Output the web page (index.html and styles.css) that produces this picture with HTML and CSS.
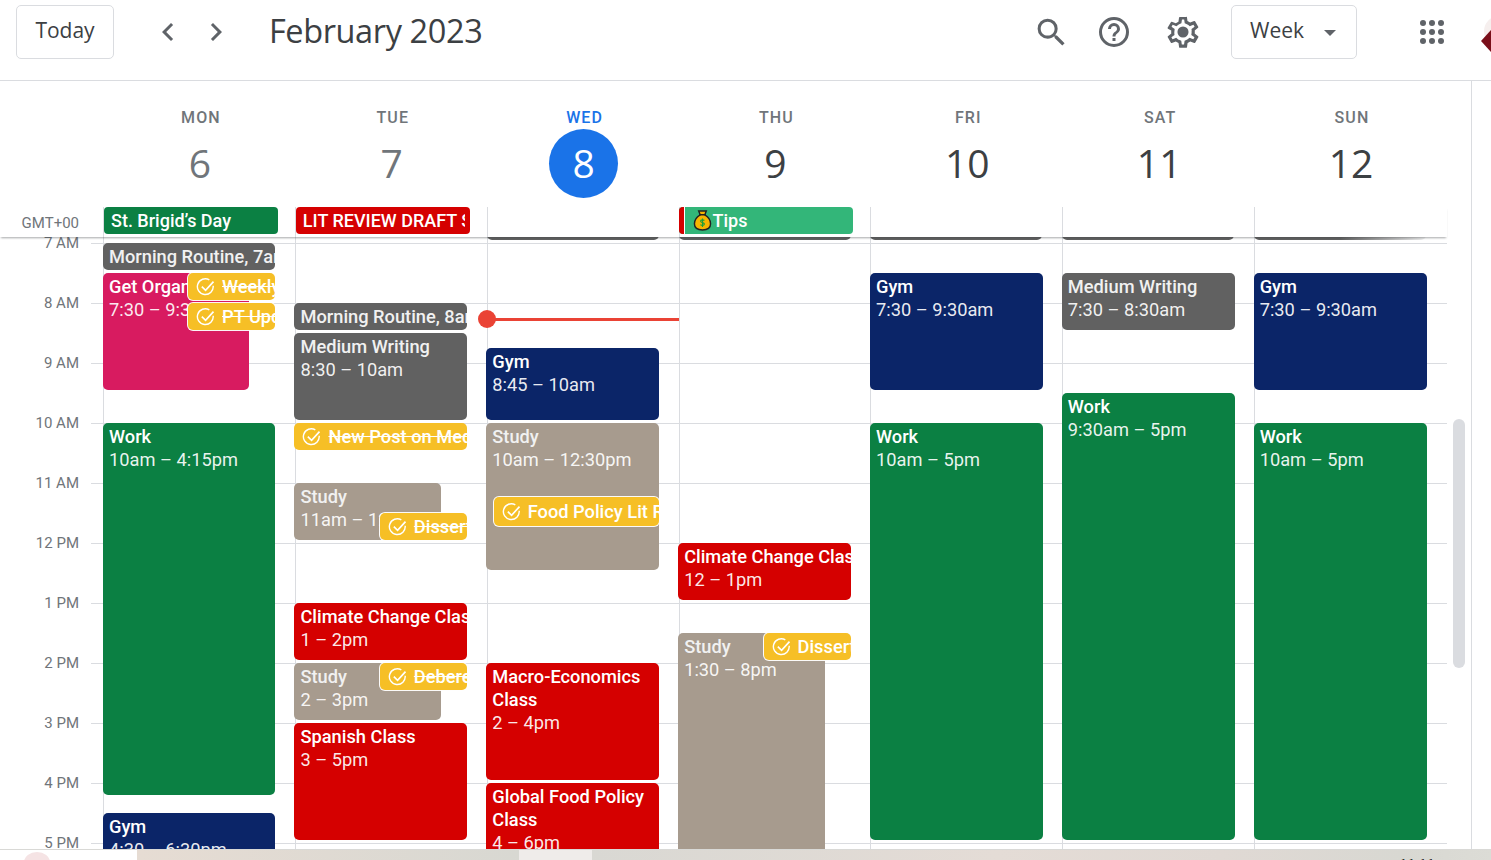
FILE: index.html
```html
<!DOCTYPE html>
<html lang="en">
<head>
<meta charset="utf-8">
<title>Google Calendar - Week of February 6, 2023</title>
<link rel="stylesheet" href="styles.css">
</head>
<body>
<div class="app">
  <header class="toolbar">
    <button class="btn btn-today"><span class="btn-label">Today</span></button>
    <div class="nav">
      <svg class="chev" viewBox="0 0 24 24"><path d="M15.4 7.4 14 6l-6 6 6 6 1.4-1.4L10.8 12z"/></svg>
      <svg class="chev" viewBox="0 0 24 24"><path d="M8.6 16.6 10 18l6-6-6-6-1.4 1.4L13.2 12z"/></svg>
    </div>
    <h1 class="title">February 2023</h1>
    <div class="tools">
      <svg class="icon icon-search" viewBox="0 0 24 24"><path d="M15.5 14h-.79l-.28-.27A6.47 6.47 0 0 0 16 9.5 6.5 6.5 0 1 0 9.5 16c1.61 0 3.09-.59 4.23-1.57l.27.28v.79l5 4.99L20.49 19l-4.99-5zm-6 0C7.01 14 5 11.99 5 9.5S7.01 5 9.5 5 14 7.01 14 9.5 11.99 14 9.500 14z"/></svg>
      <svg class="icon icon-help" viewBox="0 0 24 24"><path d="M11 18h2v-2h-2v2zm1-16a10 10 0 1 0 0 20 10 10 0 0 0 0-20zm0 18a8 8 0 1 1 0-16 8 8 0 0 1 0 16zm0-14a4 4 0 0 0-4 4h2a2 2 0 1 1 4 0c0 2-3 1.750-3 5h2c0-2.250 3-2.500 3-5a4 4 0 0 0-4-4z"/></svg>
      <svg class="icon icon-gear" viewBox="0 0 24 24"><path d="M19.4 13a7.500 7.500 0 0 0 0-2l2.100-1.650a.5.500 0 0 0 .12-.64l-2-3.460a.5.500 0 0 0-.61-.22l-2.490 1a7.300 7.300 0 0 0-1.690-.98l-.38-2.650A.5.500 0 0 0 14 2.500h-4a.5.500 0 0 0-.49.42l-.38 2.650c-.61.250-1.170.590-1.690.98l-2.490-1a.5.500 0 0 0-.61.220l-2 3.460a.5.500 0 0 0 .12.640L4.600 11a7.900 7.900 0 0 0 0 2l-2.110 1.650a.5.500 0 0 0-.12.640l2 3.460c.12.220.39.300.61.220l2.490-1c.52.400 1.080.730 1.690.98l.38 2.650c.03.240.24.420.49.420h4c.25 0 .46-.18.490-.42l.38-2.650c.61-.250 1.170-.590 1.690-.98l2.490 1c.23.080.490 0 .61-.22l2-3.460a.5.500 0 0 0-.12-.64L19.400 13zM17.400 11.300c.04.310.05.520.05.700s-.02.400-.05.700l-.14 1.130.89.700 1.080.84-.7 1.210-1.270-.51-1.040-.42-.9.680c-.43.320-.84.560-1.250.73l-1.060.43-.16 1.130-.2 1.350h-1.400l-.19-1.350-.16-1.130-1.060-.43c-.43-.18-.83-.41-1.230-.71l-.91-.7-1.060.43-1.270.51-.7-1.210 1.080-.84.89-.7-.14-1.130A8 8 0 0 1 6.550 12c0-.2.020-.43.05-.7l.14-1.130-.89-.7-1.080-.84.7-1.210 1.270.51 1.040.42.900-.68c.43-.32.840-.56 1.250-.73l1.060-.43.160-1.130.2-1.350h1.390l.19 1.350.16 1.130 1.060.43c.43.180.83.410 1.230.71l.91.700 1.060-.43 1.270-.51.700 1.210-1.070.85-.89.700.14 1.130zM12 8.500a3.500 3.500 0 1 0 0 7 3.500 3.500 0 0 0 0-7z"/></svg>
    </div>
    <button class="btn btn-week"><span class="btn-label">Week</span><span class="caret"></span></button>
    <div class="apps">
      <i></i><i></i><i></i><i></i><i></i><i></i><i></i><i></i><i></i>
    </div>
    <div class="avatar"><span class="avatar-mark"></span></div>
  </header>

  <main class="body">
    <section class="calendar">
      <div class="day-heads">
        <div class="day-head"><span class="dow">MON</span><span class="num past">6</span></div>
        <div class="day-head"><span class="dow">TUE</span><span class="num past">7</span></div>
        <div class="day-head today"><span class="dow">WED</span><span class="num">8</span></div>
        <div class="day-head"><span class="dow">THU</span><span class="num">9</span></div>
        <div class="day-head"><span class="dow">FRI</span><span class="num">10</span></div>
        <div class="day-head"><span class="dow">SAT</span><span class="num">11</span></div>
        <div class="day-head"><span class="dow">SUN</span><span class="num">12</span></div>
      </div>

      <div class="allday">
        <div class="tz">GMT+00</div>
        <div class="allday-cols">
          <div class="allday-col"><div class="chip green"><span class="chip-text">St. Brigid’s Day</span></div></div>
          <div class="allday-col"><div class="chip red"><span class="chip-text">LIT REVIEW DRAFT SUBMISSION</span></div></div>
          <div class="allday-col"></div>
          <div class="allday-col">
            <div class="chip tips">
              <span class="tips-flag"></span>
              <span class="tips-body">
                <svg class="bag" viewBox="0 0 20 22"><path d="M6 1h8l-1.500 4c3.500 2 6 5.500 6 9.500 0 4.500-3.500 6.500-8.500 6.500s-8.500-2-8.500-6.500c0-4 2.500-7.500 6-9.500z" fill="#f7b500" stroke="#222" stroke-width="1.500"/><path d="M6.500 5h7" stroke="#222" stroke-width="1.500"/><path d="M12 11c-1-1-4-1-4 .800s4 1 4 3c0 1.800-3 1.800-4.200.600M10 8.800v9" fill="none" stroke="#1e9e3a" stroke-width="1.200"/></svg>Tips
              </span>
            </div>
          </div>
          <div class="allday-col"></div>
          <div class="allday-col"></div>
          <div class="allday-col"></div>
        </div>
      </div>

      <div class="timegrid">
        <div class="hours">
          <div class="hour"><span class="hour-label">7 AM</span></div>
          <div class="hour"><span class="hour-label">8 AM</span></div>
          <div class="hour"><span class="hour-label">9 AM</span></div>
          <div class="hour"><span class="hour-label">10 AM</span></div>
          <div class="hour"><span class="hour-label">11 AM</span></div>
          <div class="hour"><span class="hour-label">12 PM</span></div>
          <div class="hour"><span class="hour-label">1 PM</span></div>
          <div class="hour"><span class="hour-label">2 PM</span></div>
          <div class="hour"><span class="hour-label">3 PM</span></div>
          <div class="hour"><span class="hour-label">4 PM</span></div>
          <div class="hour"><span class="hour-label">5 PM</span></div>
        </div>

        <div class="columns">
          <div class="col">
            <div class="ev grey full short" style="top:6px;height:27px"><b>Morning Routine, 7am</b></div>
            <div class="ev pink narrow short" style="top:36px;height:117px"><b>Get Organised</b><span>7:30 – 9:30am</span></div>
            <div class="ev green full" style="top:186px;height:372px"><b>Work</b><span>10am – 4:15pm</span></div>
            <div class="ev navy full" style="top:576px;height:60px"><b>Gym</b><span>4:30 – 6:30pm</span></div>
            <div class="task done side" style="top:36px;height:27px"><svg class="tick" viewBox="0 0 24 24"><use href="#tick"/></svg><s>Weekly Review</s></div>
            <div class="task done side" style="top:66px;height:27px"><svg class="tick" viewBox="0 0 24 24"><use href="#tick"/></svg><s>PT Update</s></div>
          </div>
          <div class="col">
            <div class="ev grey full shift short" style="top:66px;height:27px"><b>Morning Routine, 8am</b></div>
            <div class="ev grey full shift" style="top:96px;height:87px"><b>Medium Writing</b><span>8:30 – 10am</span></div>
            <div class="task done full shift plain" style="top:186px;height:27px"><svg class="tick" viewBox="0 0 24 24"><use href="#tick"/></svg><s>New Post on Medium</s></div>
            <div class="ev taupe narrow shift" style="top:246px;height:57px"><b>Study</b><span>11am – 12pm</span></div>
            <div class="task done side" style="top:276px;height:27px"><svg class="tick" viewBox="0 0 24 24"><use href="#tick"/></svg><s>Dissertation</s></div>
            <div class="ev red full shift short" style="top:366px;height:57px"><b>Climate Change Class</b><span>1 – 2pm</span></div>
            <div class="ev taupe narrow shift" style="top:426px;height:57px"><b>Study</b><span>2 – 3pm</span></div>
            <div class="task done side" style="top:426px;height:27px"><svg class="tick" viewBox="0 0 24 24"><use href="#tick"/></svg><s>Debere</s></div>
            <div class="ev red full shift" style="top:486px;height:117px"><b>Spanish Class</b><span>3 – 5pm</span></div>
          </div>
          <div class="col">
            <div class="ev grey tail" style="top:-27px;height:30px"></div>
            <div class="ev navy full shift" style="top:111px;height:72px"><b>Gym</b><span>8:45 – 10am</span></div>
            <div class="ev taupe full shift" style="top:186px;height:147px"><b>Study</b><span>10am – 12:30pm</span></div>
            <div class="task wide" style="top:260px;height:29px"><svg class="tick" viewBox="0 0 24 24"><use href="#tick"/></svg>Food Policy Lit Review</div>
            <div class="ev red full shift" style="top:426px;height:117px"><b>Macro-Economics Class</b><span>2 – 4pm</span></div>
            <div class="ev red full shift" style="top:546px;height:90px"><b>Global Food Policy Class</b><span>4 – 6pm</span></div>
            <div class="now"><span class="now-dot"></span></div>
          </div>
          <div class="col">
            <div class="ev grey tail" style="top:-27px;height:30px"></div>
            <div class="ev red full shift short" style="top:306px;height:57px"><b>Climate Change Class</b><span>12 – 1pm</span></div>
            <div class="ev taupe narrow shift" style="top:396px;height:240px"><b>Study</b><span>1:30 – 8pm</span></div>
            <div class="task side" style="top:396px;height:27px"><svg class="tick" viewBox="0 0 24 24"><use href="#tick"/></svg>Dissertation</div>
          </div>
          <div class="col">
            <div class="ev grey tail" style="top:-27px;height:30px"></div>
            <div class="ev navy full shift" style="top:36px;height:117px"><b>Gym</b><span>7:30 – 9:30am</span></div>
            <div class="ev green full shift" style="top:186px;height:417px"><b>Work</b><span>10am – 5pm</span></div>
          </div>
          <div class="col">
            <div class="ev grey tail" style="top:-27px;height:30px"></div>
            <div class="ev grey full shift" style="top:36px;height:57px"><b>Medium Writing</b><span>7:30 – 8:30am</span></div>
            <div class="ev green full shift" style="top:156px;height:447px"><b>Work</b><span>9:30am – 5pm</span></div>
          </div>
          <div class="col">
            <div class="ev grey tail fade" style="top:-27px;height:30px"></div>
            <div class="ev navy full shift" style="top:36px;height:117px"><b>Gym</b><span>7:30 – 9:30am</span></div>
            <div class="ev green full shift" style="top:186px;height:417px"><b>Work</b><span>10am – 5pm</span></div>
          </div>
        </div>
        <div class="scrollbar"></div>
      </div>
    </section>
    <aside class="side-rail"></aside>
  </main>

  <footer class="desktop">
    <div class="desk-a"><span class="blob"></span></div>
    <div class="desk-b"></div>
    <div class="desk-c"></div>
    <div class="desk-d"><span class="clock">11:11</span></div>
  </footer>
</div>
<svg class="defs" width="0" height="0">
  <symbol id="tick" viewBox="0 0 24 24">
    <path d="M21 5.500 11.500 16l-4.500-4.500" fill="none" stroke="currentColor" stroke-width="2"/>
    <path d="M20.600 10.500A9.500 9.500 0 1 1 16 3.400" fill="none" stroke="currentColor" stroke-width="1.700"/>
  </symbol>
</svg>
</body>
</html>
```
FILE: styles.css
```css
* { box-sizing: border-box; }
html, body { margin: 0; height: 100%; overflow: hidden; background: #fff; }
body { font-family: Roboto, "Liberation Sans", sans-serif; color: #3c4043; }
.defs { position: absolute; }

.app { height: 860px; display: flex; flex-direction: column; overflow: hidden; }

/* toolbar */
.toolbar { height: 81px; flex: none; display: flex; align-items: flex-start; border-bottom: 1px solid #dadce0; padding: 5px 47px 0 16px; position: relative; }
.btn { height: 54px; background: #fff; border: 1px solid #dadce0; border-radius: 5px; font: 400 21px "Open Sans", Roboto, sans-serif; color: #3c4043; padding: 0; }
.btn-label { position: relative; top: -2px; }
.btn-today { width: 98px; }
.nav { display: flex; gap: 12px; margin: 9px 0 0 36px; }
.chev { width: 36px; height: 36px; fill: #5f6368; }
.title { margin: -1px 0 0 35px; font: 400 32.5px/54px "Open Sans", Roboto, sans-serif; color: #3c4043; letter-spacing: -.4px; white-space: nowrap; }
.tools { display: flex; align-items: center; margin-left: auto; margin-top: 8px; }
.icon { fill: #5f6368; flex: none; }
.icon-search { width: 37px; height: 37px; margin-right: 26px; }
.icon-help { width: 36px; height: 36px; margin-right: 32px; }
.icon-gear { width: 38px; height: 38px; }
.btn-week { width: 126px; margin-left: 29px; display: flex; align-items: center; padding-left: 18px; }
.caret { width: 0; height: 0; border: 6px solid transparent; border-top-color: #5f6368; border-bottom: 0; margin: 2px 0 0 20px; }
.apps { width: 24px; flex: none; display: grid; grid-template-columns: repeat(3, 6px); gap: 3px; margin: 15px 0 0 63px; }
.apps i { width: 6px; height: 6px; border-radius: 50%; background: #5f6368; }
.avatar { position: absolute; left: 1481px; top: 16px; width: 34px; height: 38px; overflow: hidden; }
.avatar::before { content: ""; position: absolute; left: 3px; top: 0; width: 30px; height: 30px; border-radius: 50%; background: #f6efee; }
.avatar-mark { position: absolute; left: 0; top: 14px; width: 10px; height: 22px; background: #7a0f1a; clip-path: polygon(0 50%, 100% 0, 100% 100%); }

/* body */
.body { flex: 1; min-height: 0; display: flex; }
.calendar { width: 1472px; flex: none; border-right: 1px solid #dadce0; display: flex; flex-direction: column; }
.side-rail { flex: 1; }

.day-heads { height: 126px; flex: none; display: grid; grid-template-columns: repeat(7, 191.857px); margin-left: 105px; }
.day-head { display: flex; flex-direction: column; align-items: center; padding-top: 27px; }
.dow { font-size: 16px; line-height: 20px; font-weight: 500; letter-spacing: 1.1px; color: #70757a; }
.num { width: 69px; height: 69px; margin: 1px 2px 0 0; padding-bottom: 3px; border-radius: 50%; display: flex; align-items: center; justify-content: center; font: 400 39px "Open Sans", Roboto, sans-serif; color: #3c4043; }
.num.past { color: #70757a; }
.today .dow { color: #1a73e8; }
.today .num { background: #1a73e8; color: #fff; }

.allday { height: 30px; flex: none; display: flex; position: relative; z-index: 3; box-shadow: 0 2px 2px -1px rgba(60,64,67,.45); background: #fff; margin-right: 24px; }
.tz { width: 103px; padding: 7px 24px 0 0; text-align: right; font-size: 15px; line-height: 18px; color: #70757a; white-space: nowrap; }
.allday-cols { flex: none; display: grid; grid-template-columns: repeat(7, 191.857px); }
.allday-col { border-left: 1px solid #dadce0; min-width: 0; }
.chip { width: 174px; height: 27px; border-radius: 4px; font-size: 18px; font-weight: 500; line-height: 27px; color: #fff; padding: 0 5px 0 7px; white-space: nowrap; overflow: hidden; }
.chip-text { display: block; overflow: hidden; }
.chip.green { background: #0b8043; }
.chip.red { background: #d50000; }
.chip.tips { background: #33b679; padding: 0; display: flex; margin-left: -1px; }
.tips-flag { width: 5px; background: #d50000; }
.tips-body { flex: 1; border-left: 1px solid #fff; display: flex; align-items: center; padding-left: 8px; }
.bag { width: 19px; height: 21px; margin-right: 1px; }

/* time grid */
.timegrid { flex: 1; min-height: 0; position: relative; overflow: hidden; }
.hours { padding-top: 6px; }
.hour { height: 60px; margin: 0 24px 0 91px; border-top: 1px solid #dadce0; position: relative; }
.hour-label { position: absolute; right: 100%; margin-right: 12px; top: -10px; font-size: 15px; line-height: 18px; color: #70757a; white-space: nowrap; }
.columns { position: absolute; top: 0; bottom: 0; left: 103px; display: grid; grid-template-columns: repeat(7, 191.857px); }
.col { position: relative; border-left: 1px solid #dadce0; }

.ev, .task { position: absolute; border-radius: 5px; color: #fff; font-size: 18.25px; overflow: hidden; white-space: nowrap; }
.ev { padding: 2px 0 0 6px; line-height: 23px; left: -1px; }
.ev b { display: block; font-weight: 500; white-space: normal; }
.ev.short b { white-space: nowrap; }
.ev span { display: block; color: rgba(255,255,255,.92); }
.ev.grey b, .ev.taupe b { color: #f1f1f1; }
.full { width: 172px; }
.narrow { width: 146px; }
.ev.shift { left: -1.4px; }
.full.shift { width: 173px; }
.narrow.shift { width: 147px; }
.grey { background: #616161; }
.pink { background: #d81b60; }
.green { background: #0b8043; }
.navy { background: #0b2568; }
.red { background: #d50000; }
.taupe { background: #a79b8e; }
.tail { width: 172px; z-index: 0; }
.fade { background: linear-gradient(90deg, #616161 0, #616161 50%, #fff 105%); }

.task { background: #f6bf26; line-height: 27px; display: flex; align-items: center; padding-left: 8px; font-weight: 500; z-index: 2; box-shadow: 0 0 0 1px rgba(255,255,255,.95); }
.task.plain { box-shadow: none; }
.task s { text-decoration: line-through; white-space: nowrap; }
.task.side { left: 84px; width: 87px; }
.task.wide { left: 6px; width: 165px; }
.tick { width: 20px; height: 20px; flex: none; margin-right: 6px; color: #fff; }
.task.plain.full { left: -1.4px; width: 173px; }

.now { position: absolute; left: 0; right: 0; top: 81px; height: 3px; background: #ea4335; z-index: 4; }
.now-dot { position: absolute; left: -10px; top: -8px; width: 18px; height: 18px; border-radius: 50%; background: #ea4335; }

.scrollbar { position: absolute; left: 1453px; top: 182px; width: 12px; height: 249px; border-radius: 6px; background: #dadce0; }

/* desktop strip */
.desktop { height: 11px; flex: none; display: flex; overflow: hidden; position: relative; z-index: 5; border-top: 1px solid #d9d9d6; }
.desk-a { width: 137px; background: #fff; position: relative; }
.blob { position: absolute; left: 24px; top: 2px; width: 26px; height: 20px; border-radius: 50%; background: #f5e3e4; }
.desk-b { width: 382px; background: linear-gradient(90deg, #e6dcd3, #d8d8d2); }
.desk-c { width: 73px; background: #efecea; }
.desk-d { flex: 1; background: linear-gradient(90deg, #d9d8d3 0, #e4dcd6 45%, #e0d9d4 70%, #d8d8d2 90%, #dcdcd6 100%); position: relative; }
.clock { position: absolute; left: 807px; top: 7px; font-size: 14px; line-height: 16px; color: #000; font-weight: 500; }
```
